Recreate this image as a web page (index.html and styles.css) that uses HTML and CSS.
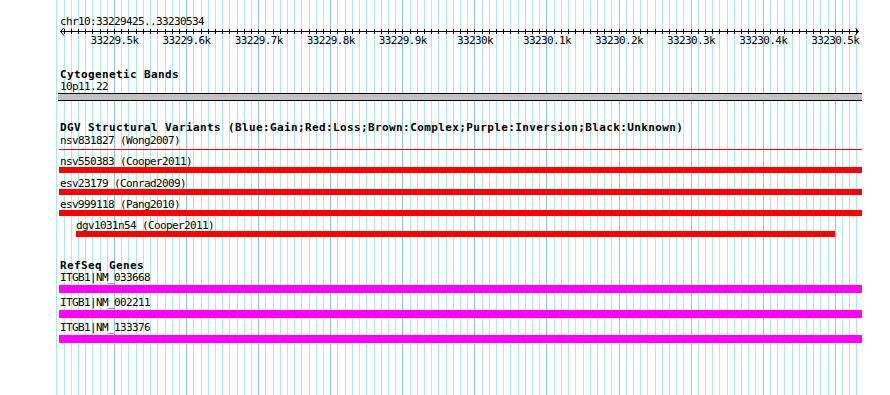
FILE: index.html
```html
<!DOCTYPE html>
<html lang="en">
<head>
<meta charset="utf-8">
<title>chr10:33229425..33230534</title>
<link rel="stylesheet" href="styles.css">
</head>
<body>
<div class="panel">
  <svg class="grid" width="890" height="395" viewBox="0 0 890 395" shape-rendering="crispEdges" aria-hidden="true">
    <defs>
      <g id="gunit">
        <rect class="gmaj" x="0" y="0" width="1" height="395"/>
        <rect class="gmin" x="7.2072" y="0" width="1" height="395"/>
        <rect class="gmin" x="14.4144" y="0" width="1" height="395"/>
        <rect class="gmin" x="21.6216" y="0" width="1" height="395"/>
        <rect class="gmin" x="28.8288" y="0" width="1" height="395"/>
        <rect class="gmin" x="36.036" y="0" width="1" height="395"/>
        <rect class="gmin" x="43.2432" y="0" width="1" height="395"/>
        <rect class="gmin" x="50.4504" y="0" width="1" height="395"/>
        <rect class="gmin" x="57.6576" y="0" width="1" height="395"/>
        <rect class="gmin" x="64.8648" y="0" width="1" height="395"/>
      </g>
      <clipPath id="gclip"><rect x="55" y="0" width="803" height="395"/></clipPath>
    </defs>
    <g clip-path="url(#gclip)">
      <use href="#gunit" x="41.98"/>
      <use href="#gunit" x="114.05"/>
      <use href="#gunit" x="186.12"/>
      <use href="#gunit" x="258.2"/>
      <use href="#gunit" x="330.27"/>
      <use href="#gunit" x="402.34"/>
      <use href="#gunit" x="474.41"/>
      <use href="#gunit" x="546.48"/>
      <use href="#gunit" x="618.55"/>
      <use href="#gunit" x="690.63"/>
      <use href="#gunit" x="762.7"/>
      <use href="#gunit" x="834.77"/>
    </g>
  </svg>

  <div class="ruler">
    <div class="ruler-title">chr10:33229425..33230534</div>
    <svg class="ruler-axis" width="890" height="20" viewBox="0 28 890 20">
      <defs>
        <g id="tunit" shape-rendering="crispEdges">
          <rect x="0" y="29" width="1" height="5"/>
          <rect x="7.2072" y="29" width="1" height="5"/>
          <rect x="14.4144" y="29" width="1" height="5"/>
          <rect x="21.6216" y="29" width="1" height="5"/>
          <rect x="28.8288" y="29" width="1" height="5"/>
          <rect x="36.036" y="29" width="1" height="5"/>
          <rect x="43.2432" y="29" width="1" height="5"/>
          <rect x="50.4504" y="29" width="1" height="5"/>
          <rect x="57.6576" y="29" width="1" height="5"/>
          <rect x="64.8648" y="29" width="1" height="5"/>
        </g>
        <clipPath id="tclip"><rect x="61" y="28" width="797" height="20"/></clipPath>
      </defs>
      <rect x="60" y="31" width="799" height="1" shape-rendering="crispEdges"/>
      <path class="arrow" d="M64 27.5 L60.5 31.5 L64 35.5"/>
      <path class="arrow" d="M855 27.5 L858.5 31.5 L855 35.5"/>
      <g clip-path="url(#tclip)">
        <use href="#tunit" x="41.98"/>
        <use href="#tunit" x="114.05"/>
        <use href="#tunit" x="186.12"/>
        <use href="#tunit" x="258.2"/>
        <use href="#tunit" x="330.27"/>
        <use href="#tunit" x="402.34"/>
        <use href="#tunit" x="474.41"/>
        <use href="#tunit" x="546.48"/>
        <use href="#tunit" x="618.55"/>
        <use href="#tunit" x="690.63"/>
        <use href="#tunit" x="762.7"/>
        <use href="#tunit" x="834.77"/>
      </g>
      <g class="tick-labels">
        <text x="114.5" y="44">33229.5k</text>
        <text x="186.6" y="44">33229.6k</text>
        <text x="258.7" y="44">33229.7k</text>
        <text x="330.8" y="44">33229.8k</text>
        <text x="402.8" y="44">33229.9k</text>
        <text x="474.9" y="44">33230k</text>
        <text x="547" y="44">33230.1k</text>
        <text x="619" y="44">33230.2k</text>
        <text x="691.1" y="44">33230.3k</text>
        <text x="763.2" y="44">33230.4k</text>
        <text x="835.3" y="44">33230.5k</text>
      </g>
    </svg>
  </div>

  <div class="tracks">
    <section class="track track-cyto">
      <h2 class="track-title">Cytogenetic Bands</h2>
      <div class="feature">
        <div class="flabel flabel-band">10p11.22</div>
        <div class="band"></div>
      </div>
    </section>

    <section class="track track-dgv">
      <h2 class="track-title">DGV Structural Variants (Blue:Gain;Red:Loss;Brown:Complex;Purple:Inversion;Black:Unknown)</h2>
      <div class="feature sv first">
        <div class="flabel">nsv831827 (Wong2007)</div>
        <div class="bar-slot"><div class="bar-thin"></div></div>
      </div>
      <div class="feature sv">
        <div class="flabel">nsv550383 (Cooper2011)</div>
        <div class="bar-red"></div>
      </div>
      <div class="feature sv">
        <div class="flabel">esv23179 (Conrad2009)</div>
        <div class="bar-red"></div>
      </div>
      <div class="feature sv">
        <div class="flabel">esv999118 (Pang2010)</div>
        <div class="bar-red"></div>
      </div>
      <div class="feature sv indent">
        <div class="flabel">dgv1031n54 (Cooper2011)</div>
        <div class="bar-red short"></div>
      </div>
    </section>

    <section class="track track-refseq">
      <h2 class="track-title">RefSeq Genes</h2>
      <div class="feature gene first">
        <div class="flabel">ITGB1|NM_033668</div>
        <div class="bar-gene"></div>
      </div>
      <div class="feature gene">
        <div class="flabel">ITGB1|NM_002211</div>
        <div class="bar-gene"></div>
      </div>
      <div class="feature gene">
        <div class="flabel">ITGB1|NM_133376</div>
        <div class="bar-gene"></div>
      </div>
    </section>
  </div>
</div>
</body>
</html>
```

FILE: styles.css
```css
html, body {
  margin: 0;
  padding: 0;
  background: #ffffff;
}

.panel {
  position: relative;
  width: 890px;
  height: 395px;
  overflow: hidden;
  font-family: "DejaVu Sans Mono", "Liberation Mono", monospace;
  color: #000;
}

.grid {
  position: absolute;
  left: 0;
  top: 0;
  z-index: 0;
}

.gmin { fill: #a9e9ee; }
.gmaj { fill: #8cc6e6; }

.ruler {
  position: relative;
  z-index: 1;
  padding-top: 15px;
}

.ruler-title {
  padding-left: 60px;
  font-size: 11px;
  line-height: 13px;
  letter-spacing: -0.62px;
  white-space: nowrap;
}

.ruler-axis {
  display: block;
  fill: #000;
}

.ruler-axis .arrow {
  fill: none;
  stroke: #000;
  stroke-width: 1;
}

.tick-labels text {
  font-family: "DejaVu Sans Mono", "Liberation Mono", monospace;
  font-size: 11px;
  letter-spacing: -0.62px;
  text-anchor: middle;
  fill: #000;
}

.tracks {
  position: relative;
  z-index: 1;
  padding-left: 59px;
  width: 803px;
}

.track-title {
  margin: 0;
  padding-left: 1px;
  font-size: 11px;
  font-weight: bold;
  line-height: 13px;
  letter-spacing: 0.38px;
  white-space: nowrap;
}

.track-cyto { margin-top: 20px; }
.track-dgv { margin-top: 20px; }
.track-refseq { margin-top: 22.4px; }

.flabel {
  padding-left: 1px;
  font-size: 11px;
  line-height: 11px;
  letter-spacing: -0.62px;
  white-space: nowrap;
}

.flabel-band { line-height: 12px; }

.band {
  height: 6px;
  margin-left: -1px;
  border-top: 1px solid #000;
  border-bottom: 1px solid #000;
  background: #c2c2c2;
}

.sv { margin-top: 4.25px; }
.sv.first { margin-top: 1px; }

.bar-slot {
  height: 6px;
  display: flex;
  align-items: center;
}

.bar-thin {
  flex: 1;
  height: 1px;
  background: #ff0000;
}

.bar-red {
  height: 6px;
  background: #ff0000;
}

.indent { margin-left: 17px; }
.indent .flabel { padding-left: 0; }
.bar-red.short { width: 759px; }

.gene { margin-top: 3.6px; }
.gene.first { margin-top: 0; }
.gene .flabel {
  line-height: 12px;
  padding-bottom: 1px;
}

.bar-gene {
  height: 8px;
  background: #ff00ff;
}
```
